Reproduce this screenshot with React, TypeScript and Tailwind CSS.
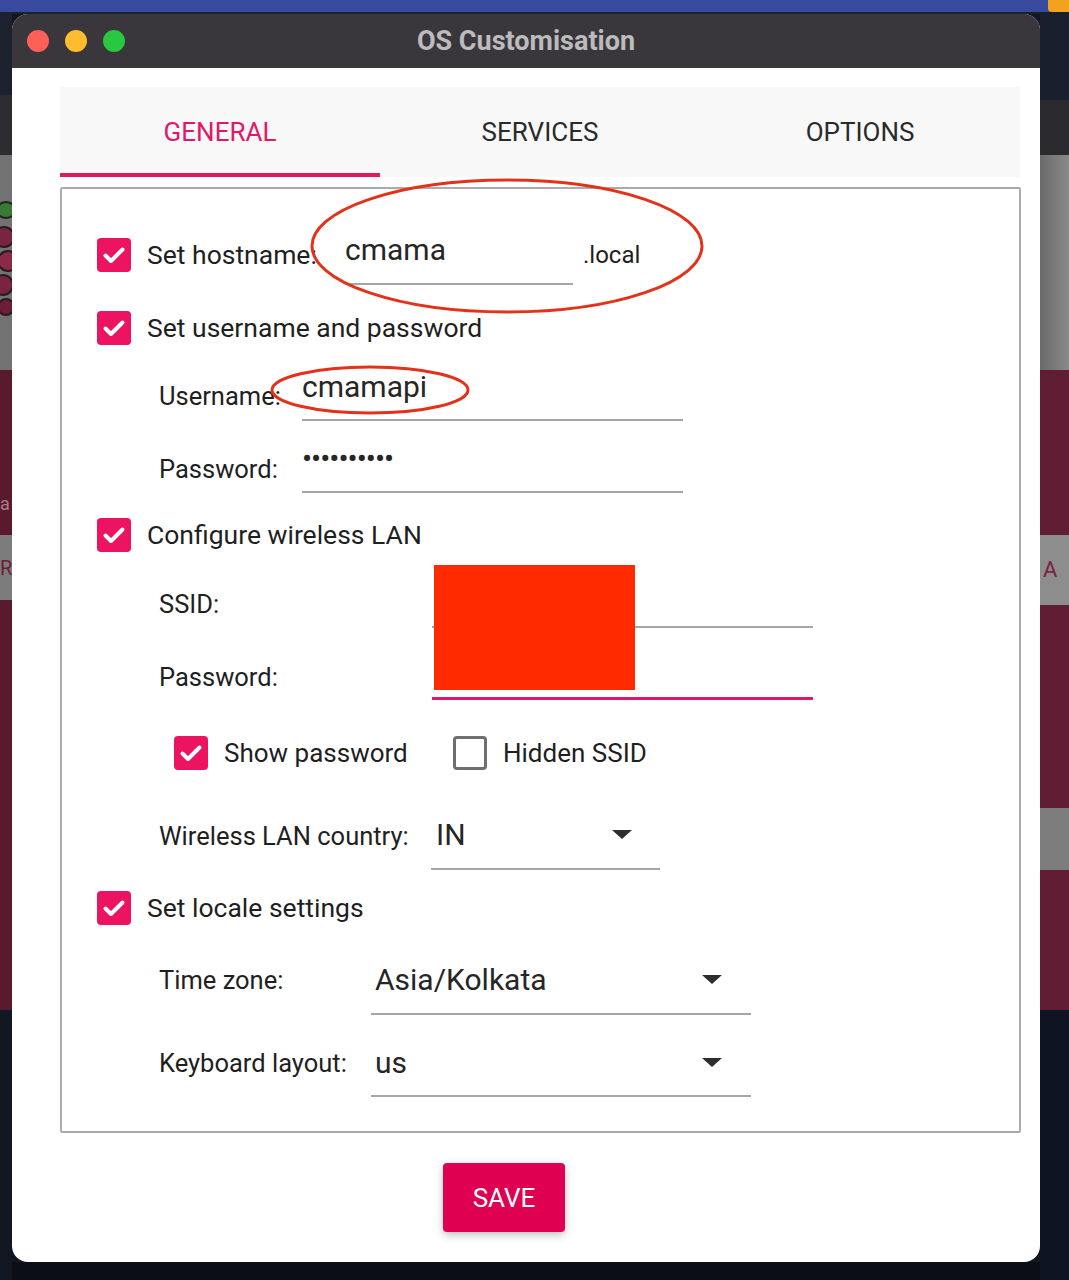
import React from "react";

function Check({ checked = true }: { checked?: boolean }) {
  if (!checked) {
    return <span className="block h-[34px] w-[34px] shrink-0 rounded-[4px] border-[3px] border-[#6f6f6f]" />;
  }
  return (
    <span className="flex h-[34px] w-[34px] shrink-0 items-center justify-center rounded-[4px] bg-[#ec1460]">
      <svg width="34" height="34" viewBox="0 0 34 34">
        <path d="M8.5 17.5l5.5 5.5 11.5-11.5" fill="none" stroke="#fff" strokeWidth="4" strokeLinecap="round" strokeLinejoin="round" />
      </svg>
    </span>
  );
}

function Arrow() {
  return (
    <svg width="20" height="10" viewBox="0 0 20 10">
      <path d="M0 0h20L10 9z" fill="#2e2e2e" />
    </svg>
  );
}

export default function App() {
  return (
    <div className="flex h-[1280px] w-[1069px] overflow-hidden bg-[#111722] font-['Roboto',sans-serif]">
      {/* desktop behind, left edge */}
      <div className="flex w-[12px] shrink-0 flex-col">
        <div className="h-[12px] bg-[#384a9e]" />
        <div className="h-[83px] bg-[#1b212e]" />
        <div className="h-[60px] bg-[#2c2c31]" />
        <div className="h-[215px] overflow-hidden bg-[#727272]">
          <svg width="12" height="215" viewBox="0 0 12 215">
            <ellipse cx="6" cy="55" rx="9" ry="8" fill="#3a7a34" stroke="#222" strokeWidth="2" />
            <circle cx="4" cy="82" r="10" fill="#7a2440" stroke="#2a1a1f" strokeWidth="2" />
            <circle cx="8" cy="106" r="10" fill="#8a2a48" stroke="#2a1a1f" strokeWidth="2" />
            <circle cx="3" cy="130" r="10" fill="#7a2440" stroke="#2a1a1f" strokeWidth="2" />
            <circle cx="6" cy="152" r="8" fill="#6b1f36" stroke="#2a1a1f" strokeWidth="2" />
          </svg>
        </div>
        <div className="flex h-[165px] items-end bg-[#5a1a2d] pb-[22px] text-[18px] leading-none text-[#b07a8a]">a</div>
        <div className="flex h-[65px] items-center bg-[#7c7c7c] text-[20px] leading-none text-[#6b1f36]">RA</div>
        <div className="h-[410px] bg-[#591a2d]" />
        <div className="flex-1 bg-[#121822]" />
      </div>

      {/* window column */}
      <div className="flex w-[1028px] shrink-0 flex-col">
        <div className="h-[12px] bg-[#384a9e]" />
        <div className="h-[2px] bg-[#1b212e]" />
        <div className="flex h-[1248px] flex-col overflow-hidden rounded-[16px] bg-white">
          <div className="grid h-[54px] shrink-0 grid-cols-[1fr_auto_1fr] items-center bg-[#39373b]">
            <div className="flex items-center gap-[16px] pl-[15px]">
              <span className="h-[22px] w-[22px] rounded-full bg-[#fe5f57]" />
              <span className="h-[22px] w-[22px] rounded-full bg-[#febc2e]" />
              <span className="h-[22px] w-[22px] rounded-full bg-[#28c840]" />
            </div>
            <div className="text-[27px] font-bold leading-none text-[#bcbbbd]">OS Customisation</div>
            <div />
          </div>

          <div className="flex flex-1 flex-col pl-[48px] pt-[19px]">
            {/* tabs */}
            <div className="flex h-[90px] w-[960px] bg-[#f8f8f8]">
              <div className="flex w-[320px] flex-col">
                <div className="flex flex-1 items-center justify-center pt-[4px] text-[26px] leading-none text-[#e2176a]">GENERAL</div>
                <div className="h-[4px] bg-[#e0195f]" />
              </div>
              <div className="flex w-[320px] items-center justify-center text-[26px] leading-none text-[#2a2a2a]">SERVICES</div>
              <div className="flex w-[320px] items-center justify-center text-[26px] leading-none text-[#2a2a2a]">OPTIONS</div>
            </div>

            {/* general panel */}
            <div className="relative mt-[10px] h-[946px] w-[961px] rounded-[2px] border-2 border-[#ababab] pl-[35px] pt-[36px] text-[#1f1f1f]">
              <div className="flex h-[60px] items-center">
                <Check />
                <span className="ml-[16px] w-[198px] text-[26.5px] leading-none">Set hostname:</span>
                <div className="flex h-[60px] w-[228px] items-center border-b-2 border-[#a6a6a6] pb-[8px] text-[30px] leading-none text-[#262626]">cmama</div>
                <span className="ml-[10px] text-[24px] leading-none">.local</span>
              </div>

              <div className="mt-[13px] flex h-[60px] items-center">
                <Check />
                <span className="ml-[16px] text-[26.5px] leading-none">Set username and password</span>
              </div>

              <div className="mt-[3px] flex h-[60px] items-center pl-[62px]">
                <span className="w-[143px] pt-[12px] text-[25.5px] leading-none">Username:</span>
                <div className="flex h-[60px] w-[381px] items-center border-b-2 border-[#a6a6a6] pb-[6px] text-[30px] leading-none text-[#262626]">cmamapi</div>
              </div>

              <div className="mt-[12px] flex h-[60px] items-center pl-[62px]">
                <span className="w-[143px] pt-[13px] text-[25.5px] leading-none">Password:</span>
                <div className="flex h-[60px] w-[381px] items-center border-b-2 border-[#a6a6a6] pb-[6px] text-[30px] leading-none tracking-[-1px] text-[#262626]">••••••••••</div>
              </div>

              <div className="mt-[12px] flex h-[60px] items-center">
                <Check />
                <span className="ml-[16px] text-[26.5px] leading-none">Configure wireless LAN</span>
              </div>

              <div className="mt-[3px] flex h-[60px] items-center pl-[62px]">
                <span className="w-[273px] pt-[14px] text-[25.5px] leading-none">SSID:</span>
                <div className="h-[60px] w-[381px] border-b-2 border-[#a6a6a6]" />
              </div>

              <div className="mt-[12px] flex h-[60px] items-center pl-[62px]">
                <span className="w-[273px] pt-[16px] text-[25.5px] leading-none">Password:</span>
                <div className="h-[60px] w-[381px] border-b-[3px] border-[#e0186a]" />
              </div>

              <div className="mt-[23px] flex h-[60px] items-center pl-[77px]">
                <Check />
                <span className="ml-[16px] w-[229px] text-[26px] leading-none">Show password</span>
                <Check checked={false} />
                <span className="ml-[16px] text-[26px] leading-none">Hidden SSID</span>
              </div>

              <div className="mt-[26px] flex h-[61px] items-center pl-[62px]">
                <span className="w-[272px] pb-[6px] text-[25.5px] leading-none">Wireless LAN country:</span>
                <div className="flex h-[61px] w-[229px] items-center justify-between border-b-2 border-[#a6a6a6] pb-[8px] pl-[5px] pr-[28px] text-[30px] leading-none text-[#262626]">
                  <span>IN</span>
                  <Arrow />
                </div>
              </div>

              <div className="mt-[8px] flex h-[60px] items-center">
                <Check />
                <span className="ml-[16px] text-[26.5px] leading-none">Set locale settings</span>
              </div>

              <div className="mt-[17px] flex h-[60px] items-center pl-[62px]">
                <span className="w-[212px] pb-[8px] text-[25.5px] leading-none">Time zone:</span>
                <div className="flex h-[60px] w-[380px] items-center justify-between border-b-2 border-[#a6a6a6] pb-[8px] pl-[4px] pr-[29px] text-[30px] leading-none text-[#262626]">
                  <span>Asia/Kolkata</span>
                  <Arrow />
                </div>
              </div>

              <div className="mt-[22px] flex h-[60px] items-center pl-[62px]">
                <span className="w-[212px] pb-[6px] text-[25.5px] leading-none">Keyboard layout:</span>
                <div className="flex h-[60px] w-[380px] items-center justify-between border-b-2 border-[#a6a6a6] pb-[6px] pl-[4px] pr-[29px] text-[30px] leading-none text-[#262626]">
                  <span>us</span>
                  <Arrow />
                </div>
              </div>

              {/* annotations drawn over the screenshot */}
              <svg className="pointer-events-none absolute left-0 top-0 overflow-visible" width="957" height="942">
                <ellipse cx="445" cy="57" rx="195" ry="66" fill="none" stroke="#e3321a" strokeWidth="3" />
                <ellipse cx="308" cy="201" rx="98" ry="23" fill="none" stroke="#e3321a" strokeWidth="3" />
              </svg>
              <div className="absolute left-[372px] top-[376px] h-[125px] w-[201px] bg-[#ff2a00]" />
            </div>

            <button className="ml-[383px] mt-[30px] h-[69px] w-[122px] rounded-[4px] bg-[#df0052] text-[26px] leading-none text-white shadow-[0_3px_8px_rgba(0,0,0,0.25)]">
              SAVE
            </button>
          </div>
        </div>
        <div className="flex-1 bg-[#0b0e15]" />
      </div>

      {/* desktop behind, right edge */}
      <div className="flex flex-1 flex-col">
        <div className="flex h-[12px] bg-[#384a9e]">
          <div className="flex-1" />
          <div className="w-[21px] rounded-bl-[4px] bg-[#f2a21f]" />
        </div>
        <div className="h-[88px] bg-[#1a1f2d]" />
        <div className="h-[55px] bg-[#2a2a2f]" />
        <div className="h-[215px] bg-gradient-to-r from-[#6a6a6a] to-[#8a8a8a]" />
        <div className="h-[165px] bg-[#611d34]" />
        <div className="flex h-[70px] items-center bg-[#8d8d8d] pl-[3px] text-[22px] leading-none text-[#7a2440]">A</div>
        <div className="h-[203px] bg-[#611d34]" />
        <div className="h-[62px] bg-[#7d7d7d]" />
        <div className="h-[140px] bg-[#611d34]" />
        <div className="flex-1 bg-[#0e1421]" />
      </div>
    </div>
  );
}
